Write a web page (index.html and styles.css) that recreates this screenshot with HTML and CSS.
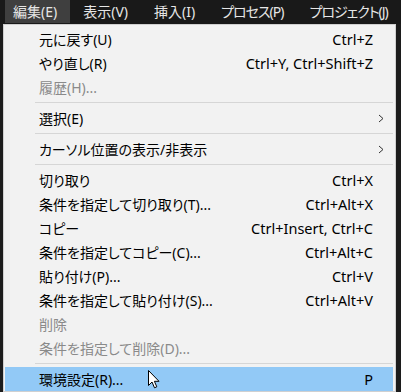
FILE: index.html
```html
<!DOCTYPE html>
<html lang="ja">
<head>
    <meta charset="UTF-8">
    <title>編集メニュー</title>
    <link rel="stylesheet" href="styles.css">
</head>
<body>
    <div class="menubar">
        <span class="top-item active">編集(E)</span>
        <span class="top-item">表示(V)</span>
        <span class="top-item">挿入(I)</span>
        <span class="top-item kana">プロセス(P)</span>
        <span class="top-item kana">プロジェクト(J)</span>
    </div>
    <div class="menu">
        <div class="item"><span>元に戻す(U)</span><span class="key">Ctrl+Z</span></div>
        <div class="item"><span>やり直し(R)</span><span class="key">Ctrl+Y, Ctrl+Shift+Z</span></div>
        <div class="item disabled"><span>履歴(H)...</span></div>
        <div class="sep"></div>
        <div class="item sub"><span>選択(E)</span>
            <svg class="chev" width="6" height="9" viewBox="0 0 6 9"><path d="M1 1 L5 4.5 L1 8" fill="none" stroke="#333" stroke-width="1"/></svg>
        </div>
        <div class="sep"></div>
        <div class="item sub"><span>カーソル位置の表示/非表示</span>
            <svg class="chev" width="6" height="9" viewBox="0 0 6 9"><path d="M1 1 L5 4.5 L1 8" fill="none" stroke="#333" stroke-width="1"/></svg>
        </div>
        <div class="sep"></div>
        <div class="item"><span>切り取り</span><span class="key">Ctrl+X</span></div>
        <div class="item"><span>条件を指定して切り取り(T)...</span><span class="key">Ctrl+Alt+X</span></div>
        <div class="item"><span>コピー</span><span class="key">Ctrl+Insert, Ctrl+C</span></div>
        <div class="item"><span>条件を指定してコピー(C)...</span><span class="key">Ctrl+Alt+C</span></div>
        <div class="item"><span>貼り付け(P)...</span><span class="key">Ctrl+V</span></div>
        <div class="item"><span>条件を指定して貼り付け(S)...</span><span class="key">Ctrl+Alt+V</span></div>
        <div class="item disabled"><span>削除</span></div>
        <div class="item disabled"><span>条件を指定して削除(D)...</span></div>
        <div class="sep"></div>
        <div class="item hover"><span>環境設定(R)...</span><span class="key">P</span></div>
    </div>
    <svg class="cursor" width="13" height="19" viewBox="0 0 13 19">
        <path d="M0.5 0.5 L0.5 15.5 L4 12 L6.5 17.8 L8.8 16.8 L6.4 11.3 L11 11.3 Z" fill="#fff" stroke="#000" stroke-width="1" stroke-linejoin="miter"/>
    </svg>
</body>
</html>
```

FILE: styles.css
```css
* { margin: 0; padding: 0; box-sizing: border-box; }
body {
    font-family: "Noto Sans", "Noto Sans CJK JP", sans-serif;
    font-size: 14px;
    font-feature-settings: "palt";
    background: #1c1c1c;
    width: 401px;
    height: 392px;
    overflow: hidden;
    position: relative;
}
.menubar {
    display: flex;
    height: 24px;
    padding-left: 5px;
    background: #191919;
    overflow: hidden;
    white-space: nowrap;
}
.top-item {
    flex-shrink: 0;
    height: 23px;
    line-height: 23px;
    padding: 0 13px 0 8px;
    margin-right: 5px;
    color: #e6e6e6;
}
.top-item.kana { letter-spacing: -1px; }
.top-item.active { background: #3f3f3f; }
.menu {
    width: 393px;
    margin-left: 3px;
    background: #f2f2f2;
    border: 1px solid #d0d0d0;
    padding: 2px 2px 0 1px;
}
.item {
    display: flex;
    justify-content: space-between;
    align-items: center;
    height: 24px;
    padding: 0 20px 0 34px;
    color: #000;
    white-space: nowrap;
}
.item .key { font-size: 14.5px; }
.item.sub { padding-right: 9px; }
.item.disabled { color: #8a8a8a; }
.item.hover { background: #92c9f6; }
.sep {
    height: 1px;
    margin: 3px 0 3px 30px;
    background: #d6d6d6;
}
.cursor {
    position: absolute;
    left: 148px;
    top: 370px;
}
```
